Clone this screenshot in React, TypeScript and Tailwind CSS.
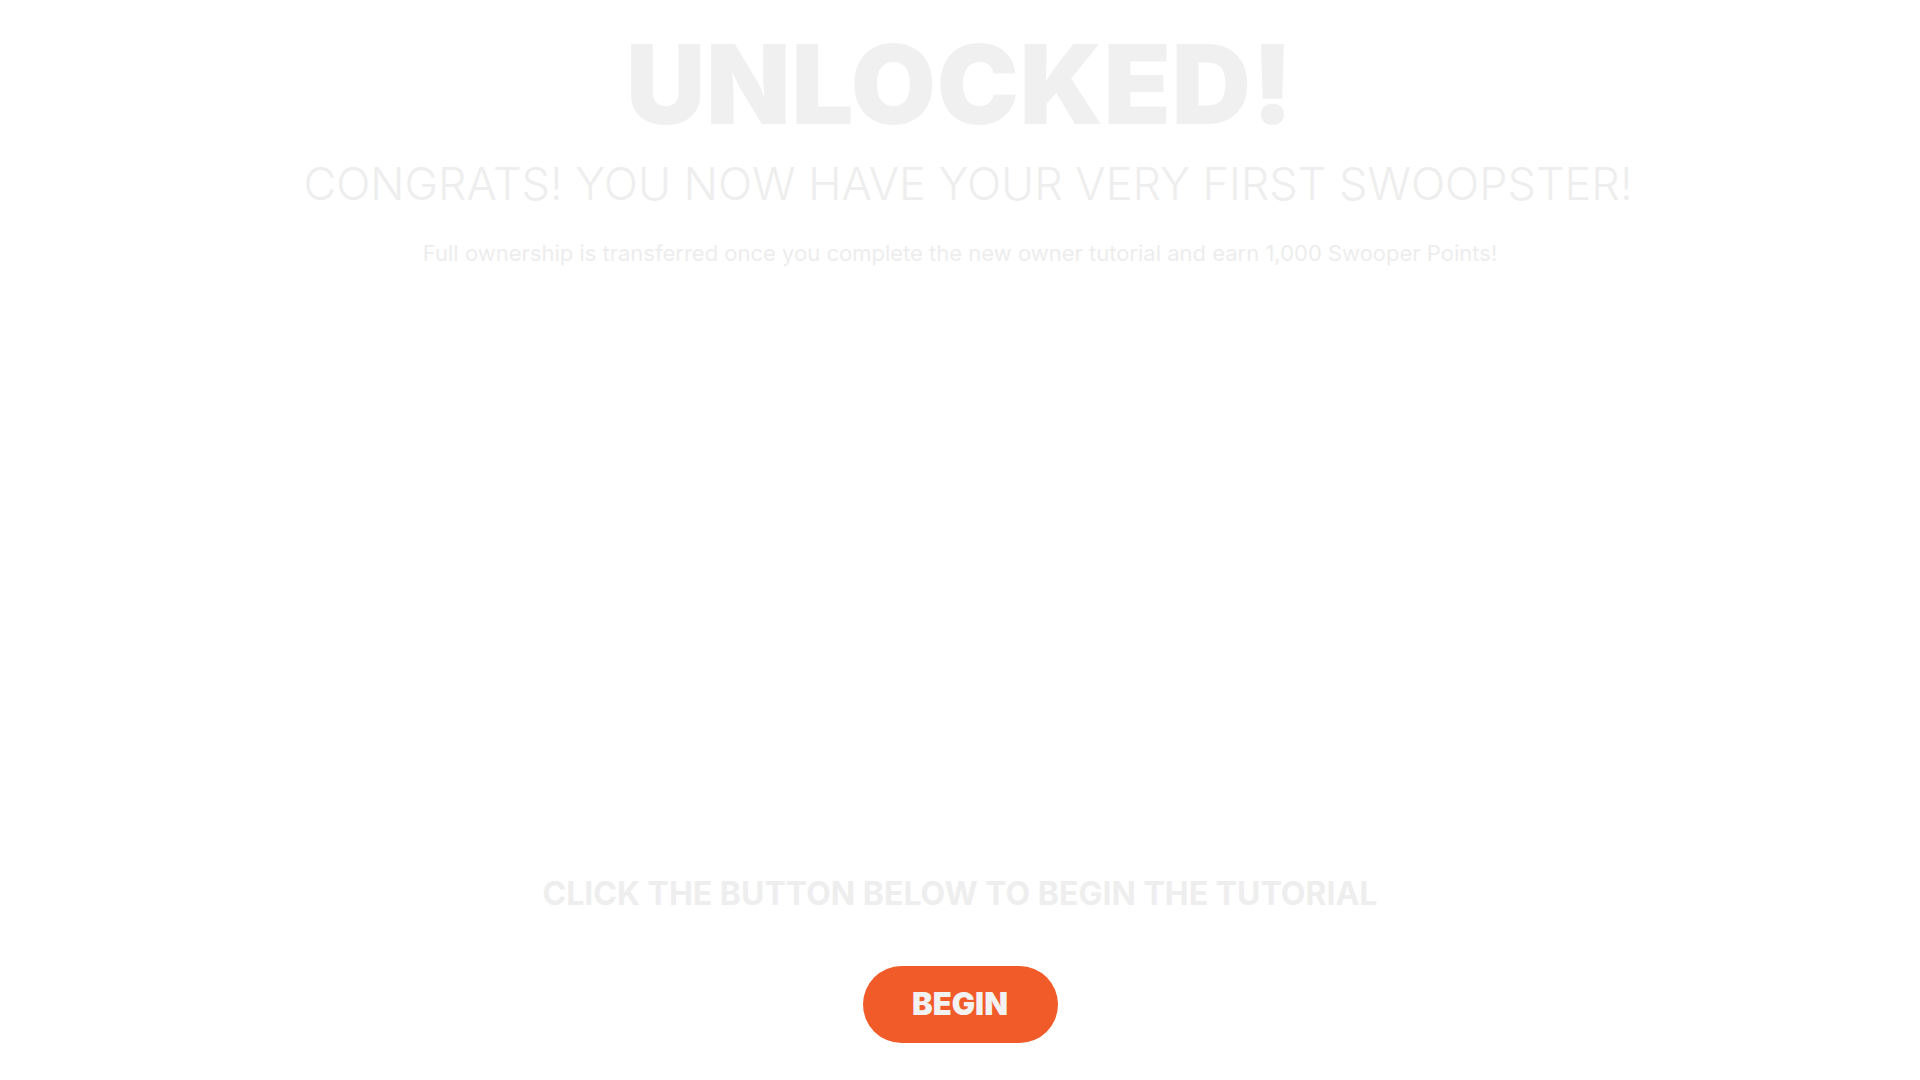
import React from "react";

export default function App() {
  return (
    <div
      className="w-full min-h-screen bg-white flex flex-col items-center"
      style={{ fontFamily: "Inter, 'Noto Sans', sans-serif" }}
    >
      <h1 className="mt-[29px] text-[110px] leading-none font-black tracking-[0.005em] text-[#f0f0f0]">
        UNLOCKED!
      </h1>
      <h2 className="mt-[22px] ml-[16px] text-[45px] leading-none font-light text-[#eeeeee]">
        CONGRATS! YOU NOW HAVE YOUR VERY FIRST SWOOPSTER!
      </h2>
      <p className="mt-[36px] text-[22px] leading-none font-normal text-[#ededed]">
        Full ownership is transferred once you complete the new owner tutorial and earn 1,000 Swooper Points!
      </p>
      <div className="h-[614px] w-full" />
      <p className="text-[32px] leading-none font-bold text-[#eeeeee]">
        CLICK THE BUTTON BELOW TO BEGIN THE TUTORIAL
      </p>
      <button className="mt-[56px] w-[195px] h-[77px] rounded-full bg-[#f15a29] text-[#f2f2f2] text-[31px] font-black flex items-center justify-center">
        BEGIN
      </button>
    </div>
  );
}
